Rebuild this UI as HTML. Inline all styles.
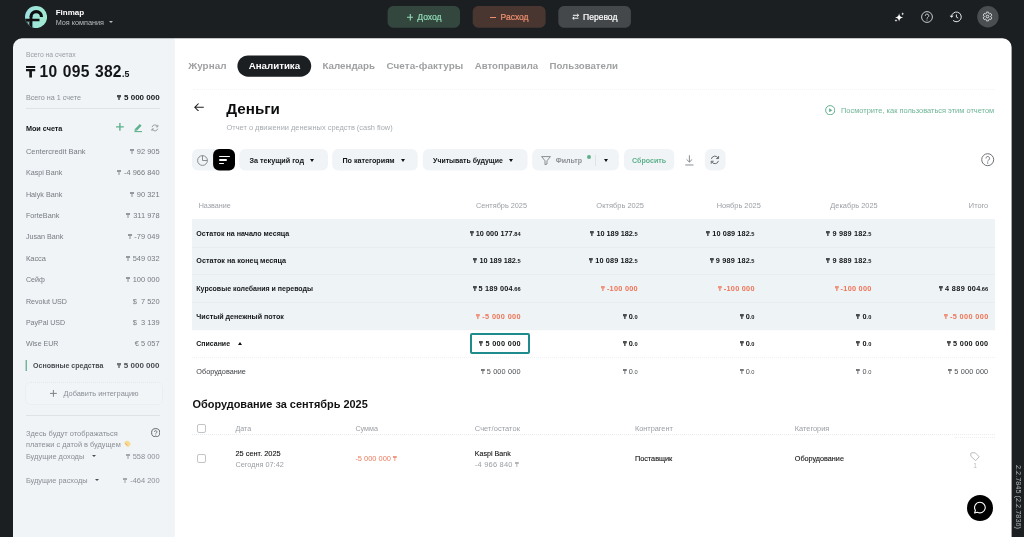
<!DOCTYPE html>
<html><head><meta charset="utf-8">
<style>
*{box-sizing:border-box;margin:0;padding:0}
html,body{width:1024px;height:537px;overflow:hidden;background:#1b1f22;font-family:"Liberation Sans",sans-serif;}
.a{position:absolute;white-space:nowrap;line-height:1}
.tg{display:inline-block;vertical-align:baseline;overflow:visible}
.s{font-size:.78em}
.g{display:inline-block;width:2.8px}
</style></head><body><div style="position:absolute;left:0;top:0;width:1024px;height:537px;will-change:transform">
<svg class="a" style="left:0;top:0" width="1024" height="537"><path d="M13 537V47.3a9 9 0 0 1 9-9H175V537z" fill="#f0f4f7"/><path d="M174.8 38.3H1002.6a9 9 0 0 1 9 9V537H174.8z" fill="#fff"/></svg>
<svg class="a" style="left:25.3px;top:6.2px;" width="22.1" height="22.1" viewBox="0 0 22.1 22.1"><defs><linearGradient id="lg" x1="0" x2="1"><stop offset="0" stop-color="#9edfe2"/><stop offset="1" stop-color="#9fecce"/></linearGradient><clipPath id="cc"><circle cx="11.05" cy="11.05" r="11.05"/></clipPath></defs><circle cx="11.05" cy="11.05" r="11.05" fill="url(#lg)"/><g clip-path="url(#cc)"><path d="M0 15.3H4.6V22H0z" fill="#1b1f22"/><path d="M2 15.6L3.9 16.2L3.9 19.2z" fill="#9edfe2"/><path d="M6 10.9a5.25 5.25 0 0 1 10.5 0" stroke="#0c0d0e" stroke-width="3.2" fill="none"/><path d="M6 10.4V21" stroke="#111" stroke-width="2.8" fill="none"/><path d="M0 14H14.5" stroke="#111" stroke-width="2.5" fill="none"/></g></svg>
<div class="a" style="left:55.70px;top:9.02px;font-size:8px;font-weight:700;color:#fff;">Finmap</div>
<div class="a" style="left:55.70px;top:19.02px;font-size:7.26px;font-weight:400;color:#b9bdc0;">Моя компания</div>
<div class="a" style="left:109.20px;top:21.20px;width:0;height:0;border-left:2.2px solid transparent;border-right:2.2px solid transparent;border-top:2.8px solid #b9bdc0"></div>
<svg class="a" style="left:0;top:0" width="1024" height="537"><rect x="387.6" y="6.1" width="72.40" height="21.60" rx="5.5" fill="#33473f"/></svg>
<svg class="a" style="left:0;top:0" width="1024" height="537"><rect x="472.7" y="6.1" width="72.90" height="21.60" rx="5.5" fill="#4a3631"/></svg>
<svg class="a" style="left:0;top:0" width="1024" height="537"><rect x="558.3" y="6.1" width="72.60" height="21.60" rx="5.5" fill="#44484b"/></svg>
<svg class="a" style="left:406.5px;top:14px;" width="6.6" height="6.6" viewBox="0 0 6.6 6.6"><path d="M3.3 0V6.6M0 3.3H6.6" stroke="#90dcb6" stroke-width="1.1"/></svg>
<div class="a" style="left:417.30px;top:13.02px;font-size:8.55px;font-weight:400;color:#90dcb6;-webkit-text-stroke:.2px #90dcb6">Доход</div>
<svg class="a" style="left:489.7px;top:16.7px;" width="6.6" height="1.2" viewBox="0 0 6.6 1.2"><path d="M0 .6H6.6" stroke="#f09070" stroke-width="1.2"/></svg>
<div class="a" style="left:500.60px;top:13.02px;font-size:8.49px;font-weight:400;color:#f09070;-webkit-text-stroke:.2px #f09070">Расход</div>
<svg class="a" style="left:571.6px;top:13.4px;" width="7.4" height="7.4" viewBox="0 0 7.4 7.4"><path d="M.9 2.3H6.6M5.2 .9L6.7 2.3L5.2 3.7M6.5 5.2H.8M2.2 3.8L.7 5.2L2.2 6.6" stroke="#fff" stroke-width=".95" fill="none"/></svg>
<div class="a" style="left:583.10px;top:13.02px;font-size:8.52px;font-weight:400;color:#fff;-webkit-text-stroke:.2px #fff">Перевод</div>
<svg class="a" style="left:893.5px;top:11.8px;" width="10.5" height="10.5" viewBox="0 0 10.5 10.5"><path d="M5.1 1.2C5.5 4 6.3 4.9 9.2 5.4C6.3 5.9 5.5 6.8 5.1 9.6C4.7 6.8 3.9 5.9 1 5.4C3.9 4.9 4.7 4 5.1 1.2z" fill="#fff"/><path d="M8.7 .3L9.1 1.5L10.3 1.9L9.1 2.3L8.7 3.5L8.3 2.3L7.1 1.9L8.3 1.5z" fill="#fff"/><path d="M2 6.9L2.4 8L3.5 8.4L2.4 8.8L2 9.9L1.6 8.8L.5 8.4L1.6 8z" fill="#fff"/></svg>
<svg class="a" style="left:921px;top:11px;" width="12" height="12" viewBox="0 0 12 12"><circle cx="6" cy="6" r="5.4" stroke="#d2d4d6" stroke-width=".95" fill="none"/><path d="M4.3 4.8a1.75 1.75 0 1 1 2.6 1.5c-.6.35-.9.7-.9 1.4" stroke="#d2d4d6" stroke-width=".95" fill="none"/><circle cx="6" cy="9" r=".6" fill="#d2d4d6"/></svg>
<svg class="a" style="left:948.8px;top:11.1px;" width="13" height="11.8" viewBox="0 0 13.5 12.4"><path d="M2.6 6.2a5.1 5.1 0 1 1 1.6 3.7" stroke="#e4e6e7" stroke-width="1.05" fill="none"/><path d="M.5 5L2.6 7.2L4.7 5z" fill="#e4e6e7"/><path d="M7.7 3.6V6.4L9.6 7.5" stroke="#e4e6e7" stroke-width="1.05" fill="none"/></svg>
<svg class="a" style="left:0;top:0" width="1024" height="537"><rect x="977.2" y="6.1" width="21.40" height="21.40" rx="11" fill="#4a4e51"/></svg>
<svg class="a" style="left:982.4px;top:11.3px;" width="11" height="11" viewBox="0 0 24 24"><path d="M19.14 12.94c.04-.3.06-.61.06-.94 0-.32-.02-.64-.07-.94l2.03-1.58c.18-.14.23-.41.12-.61l-1.92-3.32c-.12-.22-.37-.29-.59-.22l-2.39.96c-.5-.38-1.03-.7-1.62-.94l-.36-2.54c-.04-.24-.24-.41-.48-.41h-3.84c-.24 0-.43.17-.47.41l-.36 2.54c-.59.24-1.13.57-1.62.94l-2.39-.96c-.22-.08-.47 0-.59.22L2.74 8.87c-.12.21-.08.47.12.61l2.03 1.58c-.05.3-.09.63-.09.94s.02.64.07.94l-2.03 1.58c-.18.14-.23.41-.12.61l1.92 3.32c.12.22.37.29.59.22l2.39-.96c.5.38 1.03.7 1.62.94l.36 2.54c.05.24.24.41.48.41h3.84c.24 0 .44-.17.47-.41l.36-2.54c.59-.24 1.13-.56 1.62-.94l2.39.96c.22.08.47 0 .59-.22l1.92-3.32c.12-.22.07-.47-.12-.61l-2.01-1.58z" stroke="#fff" stroke-width="1.7" fill="none"/><circle cx="12" cy="12" r="2.9" stroke="#fff" stroke-width="1.7" fill="none"/></svg>
<div class="a" style="left:25.90px;top:52.02px;font-size:6.8px;font-weight:400;color:#9a9ea3;">Всего на счетах</div>
<div class="a" style="left:25.90px;top:64.02px;font-size:15.6px;font-weight:700;color:#131517;"><svg class="tg" style="height:11.4px;width:0.59em" viewBox="0 0 9.3 10.9" preserveAspectRatio="none"><path d="M0 0H9.3V1.9H0zM0 2.9H9.3V5H0zM3.3 2.9H6V10.9H3.3z" fill="currentColor"/></svg><span style="margin-left:4.5px;word-spacing:.6px;letter-spacing:.3px">10 095 382</span><span style="font-size:8.8px;margin-left:.2px">.5</span></div>
<div class="a" style="left:25.90px;top:94.02px;font-size:7.2px;font-weight:400;color:#8a8f95;">Всего на 1 счете</div>
<div class="a" style="right:864.40px;top:94.02px;font-size:8.0px;font-weight:700;color:#131517;"><svg class="tg" style="height:5px;width:0.5em" viewBox="0 0 9.3 10.9" preserveAspectRatio="none"><path d="M0 0H9.3V1.9H0zM0 2.9H9.3V5H0zM3.3 2.9H6V10.9H3.3z" fill="currentColor"/></svg><span style="margin-left:2.6px">5 000 000</span></div>
<div class="a" style="left:25.9px;top:108px;width:134px;height:1px;background:#dfe3e6"></div>
<div class="a" style="left:25.90px;top:125.02px;font-size:7.25px;font-weight:700;color:#131517;">Мои счета</div>
<svg class="a" style="left:116.2px;top:123.1px;" width="7.8" height="7.8" viewBox="0 0 7.8 7.8"><path d="M3.9 0V7.8M0 3.9H7.8" stroke="#5fb08c" stroke-width="1.4"/></svg>
<svg class="a" style="left:134px;top:123.4px;" width="8.4" height="9.4" viewBox="0 0 8.4 9.4"><path d="M6.7 1.9L2.1 6.6" stroke="#5fb08c" stroke-width="2.5" fill="none"/><path d="M.9 5.6L.6 8.1L3.2 7.6z" fill="#5fb08c"/><path d="M.5 8.6H8" stroke="#5fb08c" stroke-width="1.1"/></svg>
<svg class="a" style="left:151.4px;top:124.1px;" width="7.8" height="7.8" viewBox="0 0 8 8"><path d="M1.1 3.2A3 3 0 0 1 6.7 2.6M6.9 4.8A3 3 0 0 1 1.3 5.4" stroke="#8a8f95" stroke-width=".85" fill="none"/><path d="M7 .9V2.9H5M1 7.1V5.1H3" stroke="#8a8f95" stroke-width=".85" fill="none"/></svg>
<div class="a" style="left:25.90px;top:148.02px;font-size:7.46px;font-weight:400;color:#767b81;">Centercredit Bank</div>
<div class="a" style="right:864.40px;top:148.02px;font-size:7.46px;font-weight:400;color:#767b81;"><svg class="tg" style="height:5px;width:0.54em" viewBox="0 0 9.3 10.9" preserveAspectRatio="none"><path d="M0 0H9.3V1.5H0zM0 2.8H9.3V4.3H0zM3.7 2.8H5.6V10.9H3.7z" fill="currentColor"/></svg><i class="g"></i>92 905</div>
<div class="a" style="left:25.90px;top:169.02px;font-size:7.2px;font-weight:400;color:#767b81;">Kaspi Bank</div>
<div class="a" style="right:864.40px;top:169.02px;font-size:7.46px;font-weight:400;color:#767b81;"><svg class="tg" style="height:5px;width:0.54em" viewBox="0 0 9.3 10.9" preserveAspectRatio="none"><path d="M0 0H9.3V1.5H0zM0 2.8H9.3V4.3H0zM3.7 2.8H5.6V10.9H3.7z" fill="currentColor"/></svg><i class="g"></i>-4 966 840</div>
<div class="a" style="left:25.90px;top:191.02px;font-size:7.22px;font-weight:400;color:#767b81;">Halyk Bank</div>
<div class="a" style="right:864.40px;top:191.02px;font-size:7.46px;font-weight:400;color:#767b81;"><svg class="tg" style="height:5px;width:0.54em" viewBox="0 0 9.3 10.9" preserveAspectRatio="none"><path d="M0 0H9.3V1.5H0zM0 2.8H9.3V4.3H0zM3.7 2.8H5.6V10.9H3.7z" fill="currentColor"/></svg><i class="g"></i>90 321</div>
<div class="a" style="left:25.90px;top:212.02px;font-size:7.26px;font-weight:400;color:#767b81;">ForteBank</div>
<div class="a" style="right:864.40px;top:212.02px;font-size:7.46px;font-weight:400;color:#767b81;"><svg class="tg" style="height:5px;width:0.54em" viewBox="0 0 9.3 10.9" preserveAspectRatio="none"><path d="M0 0H9.3V1.5H0zM0 2.8H9.3V4.3H0zM3.7 2.8H5.6V10.9H3.7z" fill="currentColor"/></svg><i class="g"></i>311 978</div>
<div class="a" style="left:25.90px;top:233.02px;font-size:7.2px;font-weight:400;color:#767b81;">Jusan Bank</div>
<div class="a" style="right:864.40px;top:233.02px;font-size:7.46px;font-weight:400;color:#767b81;"><svg class="tg" style="height:5px;width:0.54em" viewBox="0 0 9.3 10.9" preserveAspectRatio="none"><path d="M0 0H9.3V1.5H0zM0 2.8H9.3V4.3H0zM3.7 2.8H5.6V10.9H3.7z" fill="currentColor"/></svg><i class="g"></i>-79 049</div>
<div class="a" style="left:25.90px;top:255.02px;font-size:7.46px;font-weight:400;color:#767b81;">Касса</div>
<div class="a" style="right:864.40px;top:255.02px;font-size:7.46px;font-weight:400;color:#767b81;"><svg class="tg" style="height:5px;width:0.54em" viewBox="0 0 9.3 10.9" preserveAspectRatio="none"><path d="M0 0H9.3V1.5H0zM0 2.8H9.3V4.3H0zM3.7 2.8H5.6V10.9H3.7z" fill="currentColor"/></svg><i class="g"></i>549 032</div>
<div class="a" style="left:25.90px;top:277.02px;font-size:7.1px;font-weight:400;color:#767b81;">Сейф</div>
<div class="a" style="right:864.40px;top:276.02px;font-size:7.46px;font-weight:400;color:#767b81;"><svg class="tg" style="height:5px;width:0.54em" viewBox="0 0 9.3 10.9" preserveAspectRatio="none"><path d="M0 0H9.3V1.5H0zM0 2.8H9.3V4.3H0zM3.7 2.8H5.6V10.9H3.7z" fill="currentColor"/></svg><i class="g"></i>100 000</div>
<div class="a" style="left:25.90px;top:299.02px;font-size:7.12px;font-weight:400;color:#767b81;">Revolut USD</div>
<div class="a" style="right:864.40px;top:298.02px;font-size:7.46px;font-weight:400;color:#767b81;">$&nbsp; 7 520</div>
<div class="a" style="left:25.90px;top:319.02px;font-size:7.05px;font-weight:400;color:#767b81;">PayPal USD</div>
<div class="a" style="right:864.40px;top:319.02px;font-size:7.46px;font-weight:400;color:#767b81;">$&nbsp; 3 139</div>
<div class="a" style="left:25.90px;top:340.02px;font-size:7.05px;font-weight:400;color:#767b81;">Wise EUR</div>
<div class="a" style="right:864.40px;top:340.02px;font-size:7.46px;font-weight:400;color:#767b81;">€ 5 057</div>
<svg class="a" style="left:0;top:0" width="1024" height="537"><rect x="25.6" y="360" width="1.30" height="11.00" rx="0" fill="#5fb08c"/></svg>
<div class="a" style="left:33.10px;top:362.02px;font-size:7.02px;font-weight:700;color:#484c50;">Основные средства</div>
<div class="a" style="right:864.60px;top:362.02px;font-size:8.0px;font-weight:700;color:#484c50;"><svg class="tg" style="height:5px;width:0.5em" viewBox="0 0 9.3 10.9" preserveAspectRatio="none"><path d="M0 0H9.3V1.9H0zM0 2.9H9.3V5H0zM3.3 2.9H6V10.9H3.3z" fill="currentColor"/></svg><span style="margin-left:2.6px">5 000 000</span></div>
<div class="a" style="left:25.4px;top:382px;width:137.4px;height:23px;border:1px dotted #e4e8eb;border-radius:6px;background:#f1f5f8"></div>
<svg class="a" style="left:49.8px;top:389.8px;" width="6.8" height="6.8" viewBox="0 0 6.8 6.8"><path d="M3.4 0V6.8M0 3.4H6.8" stroke="#7d8288" stroke-width="1"/></svg>
<div class="a" style="left:63.50px;top:390.02px;font-size:7.4px;font-weight:400;color:#8a8f95;">Добавить интеграцию</div>
<div class="a" style="left:25.9px;top:415.2px;width:134px;height:1px;background:#dfe3e6"></div>
<div class="a" style="left:25.90px;top:430.02px;font-size:7.46px;font-weight:400;color:#8a8f95;">Здесь будут отображаться</div>
<div class="a" style="left:25.90px;top:441.02px;font-size:7.39px;font-weight:400;color:#8a8f95;">платежи с датой в будущем</div>
<svg class="a" style="left:124.2px;top:440.3px;" width="7" height="8" viewBox="0 0 7 8"><path d="M1.2 1.4C2.4.2 4.2.6 5.4 1.8C6.6 3 6.9 4.4 6.2 5.3C5.8 5.8 5.2 5.9 4.8 5.7L4.6 7.4L3.4 6.6C2.2 6.2 1.2 5.2.7 4C.3 3 .5 2 1.2 1.4z" fill="#f7dc8e"/><path d="M1.2 3.2L3.6 5.4" stroke="#eaa07e" stroke-width=".9"/></svg>
<svg class="a" style="left:150.8px;top:427.7px;" width="9.4" height="9.4" viewBox="0 0 9.4 9.4"><circle cx="4.7" cy="4.7" r="4.1" stroke="#55595e" stroke-width=".9" fill="none"/><path d="M3.5 3.9a1.2 1.2 0 1 1 1.8 1c-.4.25-.6.5-.6 1" stroke="#55595e" stroke-width=".8" fill="none"/><circle cx="4.7" cy="7" r=".5" fill="#55595e"/></svg>
<div class="a" style="left:25.90px;top:453.02px;font-size:7.45px;font-weight:400;color:#8a8f95;">Будущие доходы</div>
<div class="a" style="left:91.80px;top:455.10px;width:0;height:0;border-left:2.7px solid transparent;border-right:2.7px solid transparent;border-top:2.8px solid #4a4e52"></div>
<div class="a" style="right:864.40px;top:453.02px;font-size:7.46px;font-weight:400;color:#8a8f95;"><svg class="tg" style="height:5px;width:0.54em" viewBox="0 0 9.3 10.9" preserveAspectRatio="none"><path d="M0 0H9.3V1.5H0zM0 2.8H9.3V4.3H0zM3.7 2.8H5.6V10.9H3.7z" fill="currentColor"/></svg><i class="g"></i>558 000</div>
<div class="a" style="left:25.90px;top:477.02px;font-size:7.4px;font-weight:400;color:#8a8f95;">Будущие расходы</div>
<div class="a" style="left:95.40px;top:479.30px;width:0;height:0;border-left:2.7px solid transparent;border-right:2.7px solid transparent;border-top:2.8px solid #4a4e52"></div>
<div class="a" style="right:864.40px;top:477.02px;font-size:7.46px;font-weight:400;color:#8a8f95;"><svg class="tg" style="height:5px;width:0.54em" viewBox="0 0 9.3 10.9" preserveAspectRatio="none"><path d="M0 0H9.3V1.5H0zM0 2.8H9.3V4.3H0zM3.7 2.8H5.6V10.9H3.7z" fill="currentColor"/></svg><i class="g"></i>-464 200</div>
<div class="a" style="left:188.20px;top:61.02px;font-size:9.9px;font-weight:700;color:#9fa0a2;letter-spacing:0.06px">Журнал</div>
<svg class="a" style="left:0;top:0" width="1024" height="537"><rect x="237.4" y="55.4" width="73.80" height="21.30" rx="10.65" fill="#1b1f22"/></svg>
<div class="a" style="left:248.70px;top:61.02px;font-size:9.73px;font-weight:700;color:#fff;letter-spacing:0px">Аналитика</div>
<div class="a" style="left:322.40px;top:61.02px;font-size:9.8px;font-weight:700;color:#9fa0a2;letter-spacing:0px">Календарь</div>
<div class="a" style="left:386.40px;top:61.02px;font-size:9.9px;font-weight:700;color:#9fa0a2;letter-spacing:0.1px">Счета-фактуры</div>
<div class="a" style="left:474.80px;top:61.02px;font-size:9.59px;font-weight:700;color:#9fa0a2;letter-spacing:0px">Автоправила</div>
<div class="a" style="left:549.50px;top:61.02px;font-size:9.66px;font-weight:700;color:#9fa0a2;letter-spacing:0px">Пользователи</div>
<div class="a" style="left:193px;top:89.2px;width:802px;height:0;border-top:1px dotted #f3f5f7"></div>
<svg class="a" style="left:193.6px;top:102.6px;" width="10" height="8.6" viewBox="0 0 10 8.6"><path d="M9.8 4.3H1M4.6 .5L.8 4.3L4.6 8.1" stroke="#1d2023" stroke-width="1.05" fill="none"/></svg>
<div class="a" style="left:226.30px;top:101.02px;font-size:15.2px;font-weight:700;color:#0c0d0e;">Деньги</div>
<div class="a" style="left:226.60px;top:124.02px;font-size:7.42px;font-weight:400;color:#a8acb0;">Отчет о движении денежных средств (cash flow)</div>
<svg class="a" style="left:824.8px;top:105px;" width="10.4" height="10.4" viewBox="0 0 10.4 10.4"><circle cx="5.2" cy="5.2" r="4.6" stroke="#5fb08c" stroke-width="1" fill="none"/><path d="M4.1 3.2L7.3 5.2L4.1 7.2z" fill="#5fb08c"/></svg>
<div class="a" style="left:841.00px;top:107.02px;font-size:7.44px;font-weight:400;color:#6fb596;">Посмотрите, как пользоваться этим отчетом</div>
<svg class="a" style="left:0;top:0" width="1024" height="537"><rect x="192" y="149" width="43.00" height="21.60" rx="6" fill="#f0f4f7"/></svg>
<svg class="a" style="left:197px;top:154.5px;" width="11" height="11" viewBox="0 0 11 11"><circle cx="5.5" cy="5.5" r="4.9" stroke="#7d8186" stroke-width=".9" fill="none"/><path d="M5.5 .6V5.5H10.4" stroke="#7d8186" stroke-width=".9" fill="none"/></svg>
<svg class="a" style="left:0;top:0" width="1024" height="537"><rect x="213.1" y="149" width="21.90" height="21.60" rx="6" fill="#000"/></svg>
<div class="a" style="left:219px;top:156.1px;width:10.5px;height:1.4px;background:#fff;border-radius:1px"></div>
<div class="a" style="left:219px;top:159.3px;width:8.1px;height:1.4px;background:#fff;border-radius:1px"></div>
<div class="a" style="left:219px;top:162.5px;width:4.8px;height:1.4px;background:#fff;border-radius:1px"></div>
<svg class="a" style="left:0;top:0" width="1024" height="537"><rect x="239.2" y="149" width="88.80" height="21.60" rx="6" fill="#f0f4f7"/></svg>
<div class="a" style="left:249.50px;top:157.02px;font-size:7.22px;font-weight:700;color:#131517;">За текущий год</div>
<div class="a" style="left:309.60px;top:158.85px;width:0;height:0;border-left:2.8px solid transparent;border-right:2.8px solid transparent;border-top:3.1px solid #111"></div>
<svg class="a" style="left:0;top:0" width="1024" height="537"><rect x="332.2" y="149" width="85.50" height="21.60" rx="6" fill="#f0f4f7"/></svg>
<div class="a" style="left:342.40px;top:157.02px;font-size:7.19px;font-weight:700;color:#131517;">По категориям</div>
<div class="a" style="left:400.50px;top:158.85px;width:0;height:0;border-left:2.8px solid transparent;border-right:2.8px solid transparent;border-top:3.1px solid #111"></div>
<svg class="a" style="left:0;top:0" width="1024" height="537"><rect x="422.8" y="149" width="104.80" height="21.60" rx="6" fill="#f0f4f7"/></svg>
<div class="a" style="left:433.10px;top:158.02px;font-size:6.95px;font-weight:700;color:#131517;">Учитывать будущие</div>
<div class="a" style="left:509.20px;top:158.85px;width:0;height:0;border-left:2.8px solid transparent;border-right:2.8px solid transparent;border-top:3.1px solid #111"></div>
<svg class="a" style="left:0;top:0" width="1024" height="537"><rect x="532.2" y="149" width="86.70" height="21.60" rx="6" fill="#f0f4f7"/></svg>
<svg class="a" style="left:540.8px;top:155.6px;" width="10" height="9.4" viewBox="0 0 10 9.4"><path d="M.6 .6H9.4L6 4.8V8L4 8.8V4.8z" stroke="#7d8186" stroke-width=".9" fill="none" stroke-linejoin="round"/></svg>
<div class="a" style="left:555.80px;top:157.02px;font-size:7.02px;font-weight:700;color:#8c9095;">Фильтр</div>
<div class="a" style="left:587.2px;top:155px;width:3.8px;height:3.8px;border-radius:50%;background:#5fb08c"></div>
<div class="a" style="left:595.4px;top:154.5px;width:1px;height:11px;background:#dfe3e6"></div>
<div class="a" style="left:604.30px;top:158.85px;width:0;height:0;border-left:2.8px solid transparent;border-right:2.8px solid transparent;border-top:3.1px solid #111"></div>
<svg class="a" style="left:0;top:0" width="1024" height="537"><rect x="624" y="149" width="50.30" height="21.60" rx="6" fill="#f0f4f7"/></svg>
<div class="a" style="left:632.00px;top:158.02px;font-size:7.09px;font-weight:700;color:#5fb08c;">Сбросить</div>
<svg class="a" style="left:685.4px;top:155px;" width="8.8" height="10.6" viewBox="0 0 8.8 10.6"><path d="M4.4 .3V7M1.6 4.4L4.4 7.1L7.2 4.4M.3 10H8.5" stroke="#7d8186" stroke-width=".9" fill="none"/></svg>
<svg class="a" style="left:0;top:0" width="1024" height="537"><rect x="704.9" y="149" width="20.70" height="21.60" rx="6" fill="#f0f4f7"/></svg>
<svg class="a" style="left:710.3px;top:154.9px;" width="9.8" height="9.8" viewBox="0 0 8 8"><path d="M1.1 3.2A3 3 0 0 1 6.7 2.6M6.9 4.8A3 3 0 0 1 1.3 5.4" stroke="#62676c" stroke-width=".8" fill="none"/><path d="M7 .9V2.9H5M1 7.1V5.1H3" stroke="#62676c" stroke-width=".8" fill="none"/></svg>
<svg class="a" style="left:981.3px;top:153.3px;" width="13.4" height="13.4" viewBox="0 0 13.4 13.4"><circle cx="6.7" cy="6.7" r="6" stroke="#6d7176" stroke-width="1" fill="none"/><path d="M4.9 5.4a1.85 1.85 0 1 1 2.8 1.6c-.7.4-1 .8-1 1.5" stroke="#6d7176" stroke-width="1" fill="none"/><circle cx="6.7" cy="10" r=".65" fill="#6d7176"/></svg>
<div class="a" style="left:198.70px;top:203.02px;font-size:7.18px;font-weight:400;color:#9a9ea3;">Название</div>
<div class="a" style="right:497.00px;top:202.02px;font-size:7.32px;font-weight:400;color:#9a9ea3;">Сентябрь 2025</div>
<div class="a" style="right:380.00px;top:202.02px;font-size:7.48px;font-weight:400;color:#9a9ea3;">Октябрь 2025</div>
<div class="a" style="right:263.20px;top:202.02px;font-size:7.4px;font-weight:400;color:#9a9ea3;">Ноябрь 2025</div>
<div class="a" style="right:146.40px;top:202.02px;font-size:7.4px;font-weight:400;color:#9a9ea3;">Декабрь 2025</div>
<div class="a" style="right:35.80px;top:202.02px;font-size:7.4px;font-weight:400;color:#9a9ea3;">Итого</div>
<svg class="a" style="left:0;top:0" width="1024" height="537"><rect x="192" y="219" width="803.00" height="111.30" rx="0" fill="#eef3f6"/></svg>
<div class="a" style="left:192px;top:246.6px;width:803px;height:1px;background:#e8edf0"></div>
<div class="a" style="left:192px;top:274.2px;width:803px;height:1px;background:#e8edf0"></div>
<div class="a" style="left:192px;top:301.8px;width:803px;height:1px;background:#e8edf0"></div>
<div class="a" style="left:192px;top:357px;width:803px;height:0;border-top:1px dotted #eff2f4"></div>
<div class="a" style="left:196.30px;top:231.02px;font-size:7.11px;font-weight:700;color:#131517;">Остаток на начало месяца</div>
<div class="a" style="right:503.40px;top:230.02px;font-size:7.3px;font-weight:700;color:#131517;"><svg class="tg" style="height:5px;width:0.52em" viewBox="0 0 9.3 10.9" preserveAspectRatio="none"><path d="M0 0H9.3V1.9H0zM0 2.9H9.3V5H0zM3.3 2.9H6V10.9H3.3z" fill="currentColor"/></svg><span style="margin-left:2.3px;margin-right:-0.05px;letter-spacing:0.05px">10 000 177</span><span class="s">.84</span></div>
<div class="a" style="right:386.40px;top:230.02px;font-size:7.3px;font-weight:700;color:#131517;"><svg class="tg" style="height:5px;width:0.52em" viewBox="0 0 9.3 10.9" preserveAspectRatio="none"><path d="M0 0H9.3V1.9H0zM0 2.9H9.3V5H0zM3.3 2.9H6V10.9H3.3z" fill="currentColor"/></svg><span style="margin-left:2.3px;margin-right:0.01px;letter-spacing:-0.01px">10 189 182</span><span class="s">.5</span></div>
<div class="a" style="right:269.50px;top:230.02px;font-size:7.3px;font-weight:700;color:#131517;"><svg class="tg" style="height:5px;width:0.52em" viewBox="0 0 9.3 10.9" preserveAspectRatio="none"><path d="M0 0H9.3V1.9H0zM0 2.9H9.3V5H0zM3.3 2.9H6V10.9H3.3z" fill="currentColor"/></svg><span style="margin-left:2.3px;margin-right:-0.11px;letter-spacing:0.11px">10 089 182</span><span class="s">.5</span></div>
<div class="a" style="right:152.70px;top:230.02px;font-size:7.3px;font-weight:700;color:#131517;"><svg class="tg" style="height:5px;width:0.52em" viewBox="0 0 9.3 10.9" preserveAspectRatio="none"><path d="M0 0H9.3V1.9H0zM0 2.9H9.3V5H0zM3.3 2.9H6V10.9H3.3z" fill="currentColor"/></svg><span style="margin-left:2.3px;margin-right:-0.20px;letter-spacing:0.20px">9 989 182</span><span class="s">.5</span></div>
<div class="a" style="left:196.30px;top:257.02px;font-size:7.23px;font-weight:700;color:#131517;">Остаток на конец месяца</div>
<div class="a" style="right:503.40px;top:257.02px;font-size:7.3px;font-weight:700;color:#131517;"><svg class="tg" style="height:5px;width:0.52em" viewBox="0 0 9.3 10.9" preserveAspectRatio="none"><path d="M0 0H9.3V1.9H0zM0 2.9H9.3V5H0zM3.3 2.9H6V10.9H3.3z" fill="currentColor"/></svg><span style="margin-left:2.3px;margin-right:0.01px;letter-spacing:-0.01px">10 189 182</span><span class="s">.5</span></div>
<div class="a" style="right:386.40px;top:257.02px;font-size:7.3px;font-weight:700;color:#131517;"><svg class="tg" style="height:5px;width:0.52em" viewBox="0 0 9.3 10.9" preserveAspectRatio="none"><path d="M0 0H9.3V1.9H0zM0 2.9H9.3V5H0zM3.3 2.9H6V10.9H3.3z" fill="currentColor"/></svg><span style="margin-left:2.3px;margin-right:-0.11px;letter-spacing:0.11px">10 089 182</span><span class="s">.5</span></div>
<div class="a" style="right:269.50px;top:257.02px;font-size:7.3px;font-weight:700;color:#131517;"><svg class="tg" style="height:5px;width:0.52em" viewBox="0 0 9.3 10.9" preserveAspectRatio="none"><path d="M0 0H9.3V1.9H0zM0 2.9H9.3V5H0zM3.3 2.9H6V10.9H3.3z" fill="currentColor"/></svg><span style="margin-left:2.3px;margin-right:-0.20px;letter-spacing:0.20px">9 989 182</span><span class="s">.5</span></div>
<div class="a" style="right:152.70px;top:257.02px;font-size:7.3px;font-weight:700;color:#131517;"><svg class="tg" style="height:5px;width:0.52em" viewBox="0 0 9.3 10.9" preserveAspectRatio="none"><path d="M0 0H9.3V1.9H0zM0 2.9H9.3V5H0zM3.3 2.9H6V10.9H3.3z" fill="currentColor"/></svg><span style="margin-left:2.3px;margin-right:-0.20px;letter-spacing:0.20px">9 889 182</span><span class="s">.5</span></div>
<div class="a" style="left:196.30px;top:285.02px;font-size:7.03px;font-weight:700;color:#131517;">Курсовые колебания и переводы</div>
<div class="a" style="right:503.40px;top:285.02px;font-size:7.3px;font-weight:700;color:#131517;"><svg class="tg" style="height:5px;width:0.52em" viewBox="0 0 9.3 10.9" preserveAspectRatio="none"><path d="M0 0H9.3V1.9H0zM0 2.9H9.3V5H0zM3.3 2.9H6V10.9H3.3z" fill="currentColor"/></svg><span style="margin-left:2.3px;margin-right:-0.20px;letter-spacing:0.20px">5 189 004</span><span class="s">.66</span></div>
<div class="a" style="right:386.40px;top:285.02px;font-size:7.3px;font-weight:700;color:#ef7557;"><svg class="tg" style="height:5px;width:0.52em" viewBox="0 0 9.3 10.9" preserveAspectRatio="none"><path d="M0 0H9.3V1.9H0zM0 2.9H9.3V5H0zM3.3 2.9H6V10.9H3.3z" fill="currentColor"/></svg><span style="margin-left:2.3px;margin-right:-0.27px;letter-spacing:0.27px">-100 000</span></div>
<div class="a" style="right:269.50px;top:285.02px;font-size:7.3px;font-weight:700;color:#ef7557;"><svg class="tg" style="height:5px;width:0.52em" viewBox="0 0 9.3 10.9" preserveAspectRatio="none"><path d="M0 0H9.3V1.9H0zM0 2.9H9.3V5H0zM3.3 2.9H6V10.9H3.3z" fill="currentColor"/></svg><span style="margin-left:2.3px;margin-right:-0.27px;letter-spacing:0.27px">-100 000</span></div>
<div class="a" style="right:152.70px;top:285.02px;font-size:7.3px;font-weight:700;color:#ef7557;"><svg class="tg" style="height:5px;width:0.52em" viewBox="0 0 9.3 10.9" preserveAspectRatio="none"><path d="M0 0H9.3V1.9H0zM0 2.9H9.3V5H0zM3.3 2.9H6V10.9H3.3z" fill="currentColor"/></svg><span style="margin-left:2.3px;margin-right:-0.27px;letter-spacing:0.27px">-100 000</span></div>
<div class="a" style="right:35.80px;top:285.02px;font-size:7.3px;font-weight:700;color:#131517;"><svg class="tg" style="height:5px;width:0.52em" viewBox="0 0 9.3 10.9" preserveAspectRatio="none"><path d="M0 0H9.3V1.9H0zM0 2.9H9.3V5H0zM3.3 2.9H6V10.9H3.3z" fill="currentColor"/></svg><span style="margin-left:2.3px;margin-right:-0.34px;letter-spacing:0.34px">4 889 004</span><span class="s">.66</span></div>
<div class="a" style="left:196.30px;top:314.02px;font-size:7.14px;font-weight:700;color:#131517;">Чистый денежный поток</div>
<div class="a" style="right:503.40px;top:313.02px;font-size:7.3px;font-weight:700;color:#ef7557;"><svg class="tg" style="height:5px;width:0.52em" viewBox="0 0 9.3 10.9" preserveAspectRatio="none"><path d="M0 0H9.3V1.9H0zM0 2.9H9.3V5H0zM3.3 2.9H6V10.9H3.3z" fill="currentColor"/></svg><span style="margin-left:2.3px;margin-right:-0.38px;letter-spacing:0.38px">-5 000 000</span></div>
<div class="a" style="right:386.40px;top:313.02px;font-size:7.3px;font-weight:700;color:#131517;"><svg class="tg" style="height:5px;width:0.52em" viewBox="0 0 9.3 10.9" preserveAspectRatio="none"><path d="M0 0H9.3V1.9H0zM0 2.9H9.3V5H0zM3.3 2.9H6V10.9H3.3z" fill="currentColor"/></svg><span style="margin-left:2.3px;margin-right:-0.44px;letter-spacing:0.44px">0</span><span class="s">.0</span></div>
<div class="a" style="right:269.50px;top:313.02px;font-size:7.3px;font-weight:700;color:#131517;"><svg class="tg" style="height:5px;width:0.52em" viewBox="0 0 9.3 10.9" preserveAspectRatio="none"><path d="M0 0H9.3V1.9H0zM0 2.9H9.3V5H0zM3.3 2.9H6V10.9H3.3z" fill="currentColor"/></svg><span style="margin-left:2.3px;margin-right:-0.44px;letter-spacing:0.44px">0</span><span class="s">.0</span></div>
<div class="a" style="right:152.70px;top:313.02px;font-size:7.3px;font-weight:700;color:#131517;"><svg class="tg" style="height:5px;width:0.52em" viewBox="0 0 9.3 10.9" preserveAspectRatio="none"><path d="M0 0H9.3V1.9H0zM0 2.9H9.3V5H0zM3.3 2.9H6V10.9H3.3z" fill="currentColor"/></svg><span style="margin-left:2.3px;margin-right:-0.44px;letter-spacing:0.44px">0</span><span class="s">.0</span></div>
<div class="a" style="right:35.80px;top:313.02px;font-size:7.3px;font-weight:700;color:#ef7557;"><svg class="tg" style="height:5px;width:0.52em" viewBox="0 0 9.3 10.9" preserveAspectRatio="none"><path d="M0 0H9.3V1.9H0zM0 2.9H9.3V5H0zM3.3 2.9H6V10.9H3.3z" fill="currentColor"/></svg><span style="margin-left:2.3px;margin-right:-0.38px;letter-spacing:0.38px">-5 000 000</span></div>
<div class="a" style="left:196.30px;top:340.02px;font-size:6.98px;font-weight:700;color:#131517;">Списание</div>
<div class="a" style="right:503.40px;top:340.02px;font-size:7.3px;font-weight:700;color:#131517;"><svg class="tg" style="height:5px;width:0.52em" viewBox="0 0 9.3 10.9" preserveAspectRatio="none"><path d="M0 0H9.3V1.9H0zM0 2.9H9.3V5H0zM3.3 2.9H6V10.9H3.3z" fill="currentColor"/></svg><span style="margin-left:2.3px;margin-right:-0.34px;letter-spacing:0.34px">5 000 000</span></div>
<div class="a" style="right:386.40px;top:340.02px;font-size:7.3px;font-weight:700;color:#131517;"><svg class="tg" style="height:5px;width:0.52em" viewBox="0 0 9.3 10.9" preserveAspectRatio="none"><path d="M0 0H9.3V1.9H0zM0 2.9H9.3V5H0zM3.3 2.9H6V10.9H3.3z" fill="currentColor"/></svg><span style="margin-left:2.3px;margin-right:-0.44px;letter-spacing:0.44px">0</span><span class="s">.0</span></div>
<div class="a" style="right:269.50px;top:340.02px;font-size:7.3px;font-weight:700;color:#131517;"><svg class="tg" style="height:5px;width:0.52em" viewBox="0 0 9.3 10.9" preserveAspectRatio="none"><path d="M0 0H9.3V1.9H0zM0 2.9H9.3V5H0zM3.3 2.9H6V10.9H3.3z" fill="currentColor"/></svg><span style="margin-left:2.3px;margin-right:-0.44px;letter-spacing:0.44px">0</span><span class="s">.0</span></div>
<div class="a" style="right:152.70px;top:340.02px;font-size:7.3px;font-weight:700;color:#131517;"><svg class="tg" style="height:5px;width:0.52em" viewBox="0 0 9.3 10.9" preserveAspectRatio="none"><path d="M0 0H9.3V1.9H0zM0 2.9H9.3V5H0zM3.3 2.9H6V10.9H3.3z" fill="currentColor"/></svg><span style="margin-left:2.3px;margin-right:-0.44px;letter-spacing:0.44px">0</span><span class="s">.0</span></div>
<div class="a" style="right:35.80px;top:340.02px;font-size:7.3px;font-weight:700;color:#131517;"><svg class="tg" style="height:5px;width:0.52em" viewBox="0 0 9.3 10.9" preserveAspectRatio="none"><path d="M0 0H9.3V1.9H0zM0 2.9H9.3V5H0zM3.3 2.9H6V10.9H3.3z" fill="currentColor"/></svg><span style="margin-left:2.3px;margin-right:-0.34px;letter-spacing:0.34px">5 000 000</span></div>
<div class="a" style="left:196.30px;top:368.02px;font-size:7.31px;font-weight:400;color:#3a3e42;">Оборудование</div>
<div class="a" style="right:503.40px;top:368.02px;font-size:7.3px;font-weight:400;color:#4a4e52;"><svg class="tg" style="height:5px;width:0.52em" viewBox="0 0 9.3 10.9" preserveAspectRatio="none"><path d="M0 0H9.3V1.5H0zM0 2.8H9.3V4.3H0zM3.7 2.8H5.6V10.9H3.7z" fill="currentColor"/></svg><span style="margin-left:2.3px;margin-right:-0.18px;letter-spacing:0.18px">5 000 000</span></div>
<div class="a" style="right:386.40px;top:368.02px;font-size:7.3px;font-weight:400;color:#4a4e52;"><svg class="tg" style="height:5px;width:0.52em" viewBox="0 0 9.3 10.9" preserveAspectRatio="none"><path d="M0 0H9.3V1.5H0zM0 2.8H9.3V4.3H0zM3.7 2.8H5.6V10.9H3.7z" fill="currentColor"/></svg><span style="margin-left:2.3px;margin-right:-0.24px;letter-spacing:0.24px">0</span><span class="s">.0</span></div>
<div class="a" style="right:269.50px;top:368.02px;font-size:7.3px;font-weight:400;color:#4a4e52;"><svg class="tg" style="height:5px;width:0.52em" viewBox="0 0 9.3 10.9" preserveAspectRatio="none"><path d="M0 0H9.3V1.5H0zM0 2.8H9.3V4.3H0zM3.7 2.8H5.6V10.9H3.7z" fill="currentColor"/></svg><span style="margin-left:2.3px;margin-right:-0.24px;letter-spacing:0.24px">0</span><span class="s">.0</span></div>
<div class="a" style="right:152.70px;top:368.02px;font-size:7.3px;font-weight:400;color:#4a4e52;"><svg class="tg" style="height:5px;width:0.52em" viewBox="0 0 9.3 10.9" preserveAspectRatio="none"><path d="M0 0H9.3V1.5H0zM0 2.8H9.3V4.3H0zM3.7 2.8H5.6V10.9H3.7z" fill="currentColor"/></svg><span style="margin-left:2.3px;margin-right:-0.24px;letter-spacing:0.24px">0</span><span class="s">.0</span></div>
<div class="a" style="right:35.80px;top:368.02px;font-size:7.3px;font-weight:400;color:#4a4e52;"><svg class="tg" style="height:5px;width:0.52em" viewBox="0 0 9.3 10.9" preserveAspectRatio="none"><path d="M0 0H9.3V1.5H0zM0 2.8H9.3V4.3H0zM3.7 2.8H5.6V10.9H3.7z" fill="currentColor"/></svg><span style="margin-left:2.3px;margin-right:-0.18px;letter-spacing:0.18px">5 000 000</span></div>
<div class="a" style="left:237.50px;top:341.80px;width:0;height:0;border-left:2.7px solid transparent;border-right:2.7px solid transparent;border-bottom:3px solid #111"></div>
<div class="a" style="left:470px;top:333.2px;width:60.3px;height:20.6px;border:2px solid #1e8b8c;border-radius:2px"></div>
<div class="a" style="left:192.50px;top:399.02px;font-size:10.93px;font-weight:700;color:#111;">Оборудование за сентябрь 2025</div>
<div class="a" style="left:197px;top:423.6px;width:9.2px;height:9.3px;border:1px solid #c2c5c8;border-radius:2px;background:#fff"></div>
<div class="a" style="left:197px;top:454px;width:9.2px;height:9.3px;border:1px solid #c2c5c8;border-radius:2px;background:#fff"></div>
<div class="a" style="left:235.40px;top:426.02px;font-size:7.09px;font-weight:400;color:#9a9ea3;">Дата</div>
<div class="a" style="left:355.40px;top:426.02px;font-size:7.16px;font-weight:400;color:#9a9ea3;">Сумма</div>
<div class="a" style="left:474.80px;top:425.02px;font-size:7.45px;font-weight:400;color:#9a9ea3;letter-spacing:.07px">Счет/остаток</div>
<div class="a" style="left:634.90px;top:425.02px;font-size:7.35px;font-weight:400;color:#9a9ea3;">Контрагент</div>
<div class="a" style="left:794.80px;top:425.02px;font-size:7.38px;font-weight:400;color:#9a9ea3;">Категория</div>
<div class="a" style="left:192px;top:434px;width:803px;height:0;border-top:1px dotted #e9ecee"></div>
<div class="a" style="left:955px;top:437px;width:40px;height:0;border-top:1px dotted #edf0f2"></div>
<div class="a" style="left:235.50px;top:450.02px;font-size:7.38px;font-weight:400;color:#111;-webkit-text-stroke:.1px #111">25 сент. 2025</div>
<div class="a" style="left:235.50px;top:461.02px;font-size:7.3px;font-weight:400;color:#9a9ea3;">Сегодня 07:42</div>
<div class="a" style="left:355.40px;top:455.02px;font-size:7.44px;font-weight:400;color:#ea7a5c;">-5 000 000<i class="g" style="width:2.2px"></i><svg class="tg" style="height:5px;width:0.5em" viewBox="0 0 9.3 10.9" preserveAspectRatio="none"><path d="M0 0H9.3V1.5H0zM0 2.8H9.3V4.3H0zM3.7 2.8H5.6V10.9H3.7z" fill="currentColor"/></svg></div>
<div class="a" style="left:474.80px;top:451.02px;font-size:7.1px;font-weight:400;color:#111;-webkit-text-stroke:.1px #111">Kaspi Bank</div>
<div class="a" style="left:474.80px;top:461.02px;font-size:7.5px;font-weight:400;color:#9a9ea3;letter-spacing:.2px">-4 966 840<i class="g" style="width:2.2px"></i><svg class="tg" style="height:5px;width:0.5em" viewBox="0 0 9.3 10.9" preserveAspectRatio="none"><path d="M0 0H9.3V1.5H0zM0 2.8H9.3V4.3H0zM3.7 2.8H5.6V10.9H3.7z" fill="currentColor"/></svg></div>
<div class="a" style="left:634.90px;top:455.02px;font-size:7.31px;font-weight:400;color:#111;-webkit-text-stroke:.1px #111">Поставщик</div>
<div class="a" style="left:794.80px;top:455.02px;font-size:7.23px;font-weight:400;color:#111;-webkit-text-stroke:.1px #111">Оборудование</div>
<svg class="a" style="left:969.6px;top:451.8px;" width="10" height="9.6" viewBox="0 0 10 9.6"><path d="M.8 1.6C.8 1.1 1.1.8 1.6.8H5.2L9.2 4.8L5.6 8.6L.8 4.2z" stroke="#a8acb0" stroke-width=".8" fill="none" stroke-linejoin="round"/></svg>
<div class="a" style="left:973.20px;top:463.02px;font-size:6.6px;font-weight:400;color:#b9bcbf;">1</div>
<svg class="a" style="left:0;top:0" width="1024" height="537"><rect x="967" y="495" width="26.00" height="26.00" rx="13" fill="#000"/></svg>
<svg class="a" style="left:973.4px;top:501.4px;" width="13.4" height="13.4" viewBox="0 0 13.4 13.4"><path d="M6.9 1.3a5.3 5.3 0 1 1-2.6 9.9L1.6 12l.8-2.6A5.3 5.3 0 0 1 6.9 1.3z" stroke="#fff" stroke-width="1.1" fill="none" stroke-linejoin="round"/></svg>
<div class="a" style="left:1018.3px;top:465px;font-size:7.33px;color:#aeb2b5;transform-origin:0 0;transform:rotate(90deg) translate(0,-50%)">2.2.7845 (2.2.7836)</div>
</div></body></html>
